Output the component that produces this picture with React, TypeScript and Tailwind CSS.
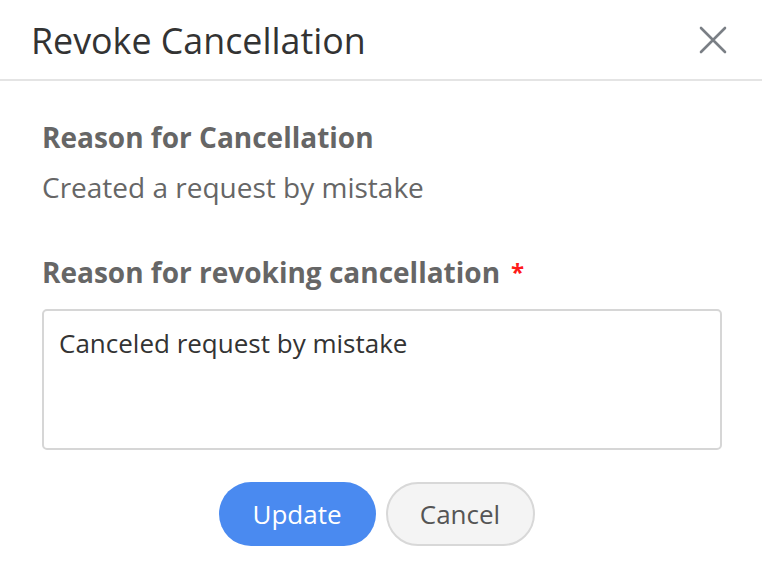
import React from 'react';

export default function App() {
  return (
    <div className="w-[762px] h-[586px] bg-white font-['Open_Sans',sans-serif] text-[#666]">
      {/* header */}
      <div className="h-[81px] flex items-center justify-between pl-[31px] pr-[33px] border-b-2 border-[#e4e4e4]">
        <h1 className="text-[35.8px] text-[#333] leading-[44px]">Revoke Cancellation</h1>
        <button className="w-[32px] h-[32px] flex items-center justify-center text-[#7a7f85]">
          <svg width="28" height="28" viewBox="0 0 28 28" fill="none" stroke="currentColor" strokeWidth="2.6" strokeLinecap="round">
            <path d="M2 2L26 26M26 2L2 26" />
          </svg>
        </button>
      </div>

      <div className="pl-[42px] pr-[40px] pt-[37px]">
        <div className="text-[28px] font-bold leading-[38px]">Reason for Cancellation</div>
        <div className="text-[28px] leading-[38px] mt-[12px]">Created a request by mistake</div>

        <div className="mt-[47px] flex items-center gap-[11px] text-[28px] font-bold leading-[38px]">
          <span>Reason for revoking cancellation</span>
          <span className="text-[#ff1a1a] text-[24px]">*</span>
        </div>

        <div className="mt-[18px] h-[141px] border-2 border-[#d6d6d6] rounded-[5px] px-[15px] pt-[14px] text-[26px] text-[#333] leading-[36px]">
          Canceled request by mistake
        </div>

        <div className="flex justify-center gap-[10px] mt-[32px] pr-[11px]">
          <button className="w-[157px] h-[64px] rounded-full bg-[#4a8af0] text-white text-[26px]">Update</button>
          <button className="w-[149px] h-[64px] rounded-full bg-[#f4f4f4] border-2 border-[#d8d8d8] text-[#555] text-[26px]">Cancel</button>
        </div>
      </div>
    </div>
  );
}
